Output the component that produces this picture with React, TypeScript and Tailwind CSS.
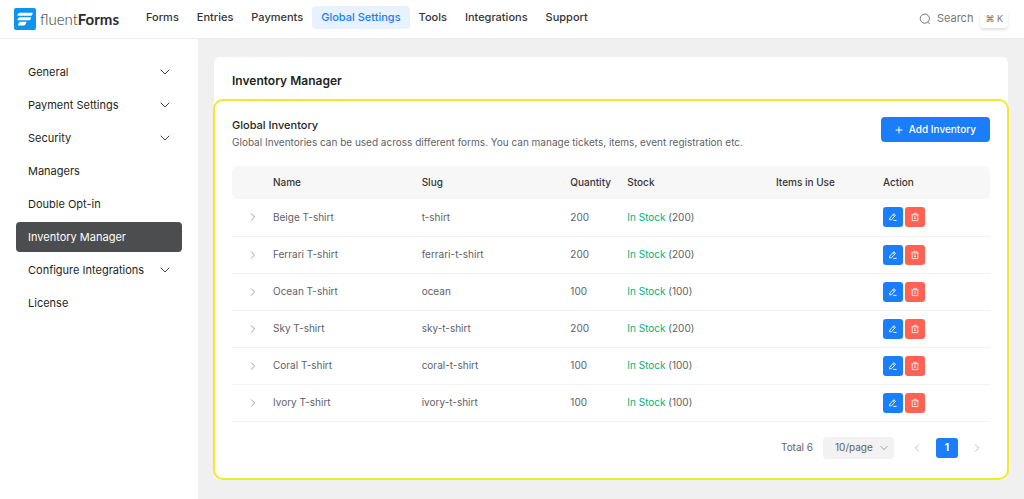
import React from 'react';
import clsx from 'clsx';

const navItems = [
  'Forms',
  'Entries',
  'Payments',
  'Global Settings',
  'Tools',
  'Integrations',
  'Support',
];

const sideItems = [
  { label: 'General', expandable: true },
  { label: 'Payment Settings', expandable: true },
  { label: 'Security', expandable: true },
  { label: 'Managers' },
  { label: 'Double Opt-in' },
  { label: 'Inventory Manager', active: true },
  { label: 'Configure Integrations', expandable: true },
  { label: 'License' },
];

const inventory = [
  { name: 'Beige T-shirt', slug: 't-shirt', quantity: 200 },
  { name: 'Ferrari T-shirt', slug: 'ferrari-t-shirt', quantity: 200 },
  { name: 'Ocean T-shirt', slug: 'ocean', quantity: 100 },
  { name: 'Sky T-shirt', slug: 'sky-t-shirt', quantity: 200 },
  { name: 'Coral T-shirt', slug: 'coral-t-shirt', quantity: 100 },
  { name: 'Ivory T-shirt', slug: 'ivory-t-shirt', quantity: 100 },
];

const chevrons = {
  down: 'M1 3l4 4 4-4',
  left: 'M7 1L3 5l4 4',
  right: 'M3 1l4 4-4 4',
};

function Chevron({
  dir,
  className,
}: {
  dir: keyof typeof chevrons;
  className?: string;
}) {
  return (
    <svg
      viewBox="0 0 10 10"
      fill="none"
      stroke="currentColor"
      strokeLinecap="round"
      strokeLinejoin="round"
      className={className}
      aria-hidden="true"
    >
      <path d={chevrons[dir]} />
    </svg>
  );
}

function Logo() {
  return (
    <a href="#" className="flex items-center gap-1">
      <svg viewBox="0 0 22 22" className="size-[22px]" aria-hidden="true">
        <rect width="22" height="22" rx="2" fill="#0d93f2" />
        <g fill="#fff">
          <path d="M6.2 4.800h12.600l-.5 1.600c-.3.9-.9 1.400-1.800 1.400H3.400c.3-1.800 1.200-3 2.800-3z" />
          <path d="M6.200 9.300h11l-.5 1.600c-.3.9-.9 1.400-1.800 1.400H3.400c.3-1.800 1.200-3 2.800-3z" />
          <path d="M6.600 13.800h5.900l-.5 1.500c-.5 1.500-1.400 2.300-2.800 2.300H4c.3-2.400 1.100-3.800 2.600-3.800z" />
        </g>
      </svg>
      <span className="font-['Lato'] text-[15px] leading-5 font-light text-[#2b2d30]">
        fluent<span className="font-bold">Forms</span>
      </span>
    </a>
  );
}

function Header() {
  return (
    <header className="flex h-[39px] items-center border-b border-[#ececec] bg-white pr-4 pb-px pl-[14px]">
      <Logo />
      <nav className="ml-[18px] flex flex-1 pb-[2px]">
        {navItems.map((item) => (
          <a
            key={item}
            href="#"
            className={clsx(
              'rounded px-[9px] py-1 text-[11px] leading-[15px] font-medium whitespace-nowrap',
              item === 'Global Settings'
                ? 'bg-[#e8f2ff] text-[#1a7efb]'
                : 'text-[#353535]'
            )}
          >
            {item}
          </a>
        ))}
      </nav>
      <button
        type="button"
        className="flex items-center text-[11px] text-[#767676]"
      >
        <svg
          viewBox="0 0 12 12"
          fill="none"
          stroke="currentColor"
          className="mr-[6px] size-3"
          aria-hidden="true"
        >
          <circle cx="5.800" cy="5.600" r="4.600" />
          <path d="M8.800 9.100l2 2" />
        </svg>
        Search
        <kbd className="ml-[7px] rounded bg-white px-[5px] font-['Inter','DejaVu_Sans',sans-serif] text-[9px] leading-[18px] shadow-[0_2px_3px_rgba(0,0,0,0.12)]">
          ⌘ K
        </kbd>
      </button>
    </header>
  );
}

function Sidebar() {
  return (
    <aside className="w-[198px] shrink-0 bg-white px-4 pt-[18px]">
      <ul className="flex flex-col gap-[3px]">
        {sideItems.map((item) => (
          <li key={item.label}>
            <a
              href="#"
              className={clsx(
                'flex h-[30px] items-center justify-between rounded px-3 text-[11px]',
                item.active ? 'bg-[#4b4d4e] text-white' : 'text-[#1e1f21]'
              )}
            >
              {item.label}
              {item.expandable && (
                <Chevron dir="down" className="size-[10px] text-[#444]" />
              )}
            </a>
          </li>
        ))}
      </ul>
    </aside>
  );
}

function InventoryTable() {
  return (
    <table className="w-full table-fixed text-left text-[10px] text-[#606266]">
      <colgroup>
        <col className="w-[33px]" />
        <col />
        <col />
        <col className="w-[57px]" />
        <col />
        <col className="w-[107px]" />
        <col className="w-[115px]" />
      </colgroup>
      <thead>
        <tr className="h-[33px] bg-[#f7f7f7] text-[#353535]">
          <th className="rounded-l-md" aria-label="Expand" />
          <th className="px-2 font-medium">Name</th>
          <th className="px-2 font-medium">Slug</th>
          <th className="px-2 font-medium">Quantity</th>
          <th className="px-2 font-medium">Stock</th>
          <th className="px-2 font-medium">Items in Use</th>
          <th className="rounded-r-md px-2 font-medium">Action</th>
        </tr>
      </thead>
      <tbody>
        {inventory.map((item) => (
          <tr key={item.slug} className="h-[37px] border-b border-[#f3f3f3]">
            <td className="pl-4">
              <button
                type="button"
                aria-label={`Expand ${item.name}`}
                className="block p-px"
              >
                <Chevron dir="right" className="size-2 text-[#888]" />
              </button>
            </td>
            <td className="px-2">{item.name}</td>
            <td className="px-2">{item.slug}</td>
            <td className="px-2">{item.quantity}</td>
            <td className="px-2">
              <span className="text-[#00b27f]">In Stock</span> ({item.quantity})
            </td>
            <td className="px-2" />
            <td className="px-2">
              <div className="flex gap-[2px]">
                <button
                  type="button"
                  aria-label={`Edit ${item.name}`}
                  className="flex size-5 items-center justify-center rounded-[3px] bg-[#1a7efb] text-white"
                >
                  <svg
                    viewBox="0 0 10 10"
                    fill="none"
                    stroke="currentColor"
                    strokeWidth="0.9"
                    strokeLinejoin="round"
                    className="size-[10px]"
                    aria-hidden="true"
                  >
                    <path d="M1.800 6.100L5.800 1.700l1.700 1.600-4 4.400-1.900.2z" />
                    <path d="M4.900 2.700l1.700 1.600M5.200 8.400h3.400" />
                  </svg>
                </button>
                <button
                  type="button"
                  aria-label={`Delete ${item.name}`}
                  className="flex size-5 items-center justify-center rounded-[3px] bg-[#ff6154] text-white"
                >
                  <svg
                    viewBox="0 0 10 10"
                    fill="none"
                    stroke="currentColor"
                    strokeWidth="0.8"
                    strokeLinejoin="round"
                    className="size-[10px]"
                    aria-hidden="true"
                  >
                    <path d="M1.500 2.800h7M3.500 2.800V1.400h3v1.400M2.200 2.800v5.800h5.600V2.800M4 4.900h2M4 6.600h2" />
                  </svg>
                </button>
              </div>
            </td>
          </tr>
        ))}
      </tbody>
    </table>
  );
}

function Pagination() {
  return (
    <div className="mt-[15px] flex items-center justify-end pr-[2px] text-[10px] text-[#606266]">
      <span>Total 6</span>
      <div className="relative ml-[10px]">
        <select
          aria-label="Items per page"
          className="h-[22px] w-[71px] appearance-none rounded bg-[#f2f2f2] pl-3 text-[10px]"
        >
          <option>10/page</option>
          <option>20/page</option>
          <option>50/page</option>
        </select>
        <Chevron
          dir="down"
          className="pointer-events-none absolute top-[7px] right-[6px] size-2 text-[#888]"
        />
      </div>
      <button
        type="button"
        aria-label="Previous page"
        className="ml-3 flex h-5 w-[22px] items-center justify-center text-[#a8abb2]"
      >
        <Chevron dir="left" className="size-2" />
      </button>
      <button
        type="button"
        className="mx-2 h-5 w-[22px] rounded-[3px] bg-[#1a7efb] font-bold text-white"
      >
        1
      </button>
      <button
        type="button"
        aria-label="Next page"
        className="flex h-5 w-[22px] items-center justify-center text-[#a8abb2]"
      >
        <Chevron dir="right" className="size-2" />
      </button>
    </div>
  );
}

function App(): React.JSX.Element {
  return (
    <div className="flex min-h-screen flex-col bg-[#f0f0f0] font-['Inter',sans-serif]">
      <Header />
      <div className="flex flex-1">
        <Sidebar />
        <main className="min-w-0 flex-1 px-4 pt-[18px] pb-5">
          <div className="rounded-md bg-white">
            <h1 className="px-[18px] pt-[15px] pb-[9px] text-[12px] leading-[18px] font-semibold text-[#1e1f21]">
              Inventory Manager
            </h1>
            <section className="-mx-px rounded-[10px] border-2 border-[#f0e92c] px-[17px] pt-4 pb-[19px]">
              <div className="mb-[15px] flex items-start justify-between">
                <div>
                  <h2 className="text-[11px] leading-[17px] font-medium text-[#1e1f21]">
                    Global Inventory
                  </h2>
                  <p className="text-[10px] leading-[17px] text-[#606266]">
                    Global Inventories can be used across different forms. You
                    can manage tickets, items, event registration etc.
                  </p>
                </div>
                <button
                  type="button"
                  className="flex h-[25px] shrink-0 items-center gap-[6px] rounded bg-[#1a7efb] px-[14px] text-[10px] font-medium text-white"
                >
                  <svg
                    viewBox="0 0 8 8"
                    stroke="currentColor"
                    className="size-2"
                    aria-hidden="true"
                  >
                    <path d="M4 .5v7M.5 4h7" />
                  </svg>
                  Add Inventory
                </button>
              </div>
              <InventoryTable />
              <Pagination />
            </section>
          </div>
        </main>
      </div>
    </div>
  );
}
export default App;
